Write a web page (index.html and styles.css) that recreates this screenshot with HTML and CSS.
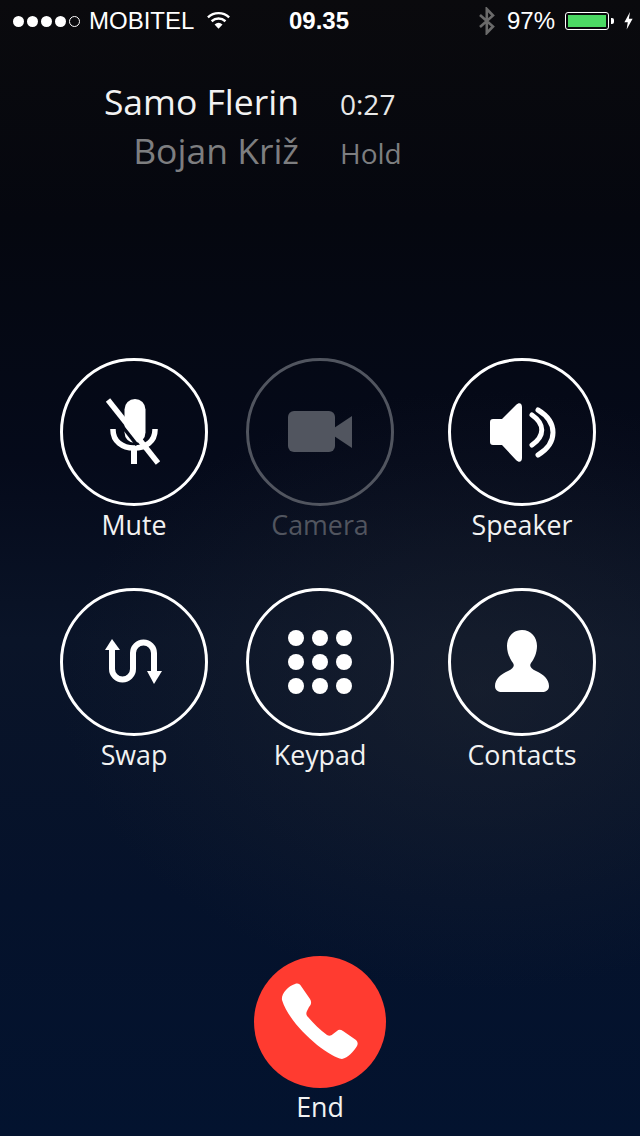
FILE: index.html
```html
<!DOCTYPE html>
<html lang="en">

<head>
  <link rel="stylesheet" href="styles.css">
</head>

<body>
  <div class="screen">
    <div class="status-bar">
      <div class="status-left">
        <span class="dot"></span><span class="dot"></span><span class="dot"></span><span class="dot"></span><span class="dot dot-empty"></span>
        <span class="carrier">MOBITEL</span>
        <svg class="wifi" width="24" height="19" viewBox="0 0 26 20">
          <path d="M1 6.5C7.5 0.5 17.5 0.5 24 6.5" fill="none" stroke="#fff" stroke-width="2.6"/>
          <path d="M5 10.8C9.5 6.8 15.5 6.8 20 10.8" fill="none" stroke="#fff" stroke-width="2.6"/>
          <path d="M12.5 19L8.2 14.2C11 12 14 12 16.8 14.2Z" fill="#fff"/>
        </svg>
      </div>
      <div class="status-time">09.35</div>
      <div class="status-right">
        <svg class="bluetooth" width="18" height="28" viewBox="0 0 18 28">
          <path d="M2 8L15 19.5L8.8 26V2L15 8.5L2 20" fill="none" stroke="#6a6a6a" stroke-width="2.6"/>
        </svg>
        <span class="battery-pct">97%</span>
        <div class="battery"><div class="battery-fill"></div></div>
        <div class="battery-cap"></div>
        <svg class="bolt" width="9" height="18" viewBox="0 0 12 20" preserveAspectRatio="none">
          <path d="M8 0L0.5 11.5H5L3.5 19.5L11.5 7.5H6.5Z" fill="#fff"/>
        </svg>
      </div>
    </div>

    <div class="call-info">
      <div class="call-name">Samo Flerin</div>
      <div class="call-time">0:27</div>
      <div class="call-name on-hold">Bojan Kri&#382;</div>
      <div class="call-time on-hold">Hold</div>
    </div>

    <div class="buttons">
      <div class="btn-row">
        <div class="btn">
          <div class="circle">
            <svg viewBox="0 0 148 148" width="148" height="148">
              <rect x="64.5" y="41" width="21" height="44" rx="10.5" fill="#fff"/>
              <path d="M53 71V72C53 83 62 90 74 90C86 90 95 83 95 72V71" fill="none" stroke="#fff" stroke-width="5.5"/>
              <rect x="71" y="90" width="6" height="16" fill="#fff"/>
              <path d="M44 45L77 87" stroke="#050a1a" stroke-width="3.5"/>
              <path d="M48 42L98 105" stroke="#fff" stroke-width="5.5"/>
            </svg>
          </div>
          <div class="label">Mute</div>
        </div>
        <div class="btn btn-middle btn-off">
          <div class="circle">
            <svg viewBox="0 0 148 148" width="148" height="148">
              <rect x="42" y="53" width="47" height="41" rx="6" fill="#51555f"/>
              <path d="M88 70L106 58V90L88 78Z" fill="#51555f"/>
            </svg>
          </div>
          <div class="label">Camera</div>
        </div>
        <div class="btn">
          <div class="circle">
            <svg viewBox="0 0 148 148" width="148" height="148">
              <path d="M45 61H54L68 47C71 44 74 45 74 49V100C74 104 71 105 68 102L54 87H45C43 87 42 86 42 84V64C42 62 43 61 45 61Z" fill="#fff"/>
              <path d="M84 57C97 66 97 78 84 87" fill="none" stroke="#fff" stroke-width="5" stroke-linecap="round"/>
              <path d="M90 52C110 64 110 85 90 97" fill="none" stroke="#fff" stroke-width="5" stroke-linecap="round"/>
            </svg>
          </div>
          <div class="label">Speaker</div>
        </div>
      </div>

      <div class="btn-row">
        <div class="btn">
          <div class="circle">
            <svg viewBox="0 0 148 148" width="148" height="148">
              <path d="M52 60V81A10.5 10.5 0 0 0 73 81V65A10.5 10.5 0 0 1 94 65V85" fill="none" stroke="#fff" stroke-width="6"/>
              <path d="M45 62L52 51L60 62Z" fill="#fff"/>
              <path d="M87 83H102L94 96Z" fill="#fff"/>
            </svg>
          </div>
          <div class="label">Swap</div>
        </div>
        <div class="btn btn-middle">
          <div class="circle">
            <svg viewBox="0 0 148 148" width="148" height="148" fill="#fff">
              <circle cx="50" cy="50" r="8"/><circle cx="74" cy="50" r="8"/><circle cx="98" cy="50" r="8"/>
              <circle cx="50" cy="74" r="8"/><circle cx="74" cy="74" r="8"/><circle cx="98" cy="74" r="8"/>
              <circle cx="50" cy="98" r="8"/><circle cx="74" cy="98" r="8"/><circle cx="98" cy="98" r="8"/>
            </svg>
          </div>
          <div class="label">Keypad</div>
        </div>
        <div class="btn">
          <div class="circle">
            <svg viewBox="0 0 148 148" width="148" height="148">
              <path d="M74 42C83 42 89 49 89 58C89 65 86 71 83 75C81 78 83 81 88 83C95 86 101 91 101 98C101 102 98 104 94 104H54C50 104 47 102 47 98C47 91 53 86 60 83C65 81 67 78 65 75C62 71 59 65 59 58C59 49 65 42 74 42Z" fill="#fff"/>
            </svg>
          </div>
          <div class="label">Contacts</div>
        </div>
      </div>
    </div>

    <div class="end-call">
      <div class="end-circle">
        <svg viewBox="0 0 132 132" width="132" height="132">
          <path d="M28 44C27 38 34 30 41 28C44 27 46 28 47 30L56 43C58 46 57 49 55 51L53 55C52 57 52 59 54 61C60 68 66 74 73 79C75 80 77 80 79 78L83 75C85 73 87 74 89 75L102 84C104 86 104 88 103 90C100 95 94 102 88 103C74 101 36 70 28 44Z" fill="#fff"/>
        </svg>
      </div>
      <div class="label">End</div>
    </div>
  </div>
</body>

</html>
```

FILE: styles.css
```css
html, body {
  margin: 0;
  padding: 0;
}

.screen {
  width: 640px;
  height: 1136px;
  overflow: hidden;
  color: #fff;
  font-family: "Open Sans", sans-serif;
  background:
    radial-gradient(ellipse 420px 300px at 480px 690px, rgba(40, 44, 52, 0.4), rgba(40, 44, 52, 0)),
    linear-gradient(#0a0a0d 0, #05070f 220px, #050a1a 460px, #0a1428 640px, #05122b 900px, #03132f 1136px);
}

/* status bar */
.status-bar {
  height: 42px;
  display: grid;
  grid-template-columns: 1fr auto 1fr;
  align-items: center;
  padding: 0 7px 0 9px;
  font-family: "Liberation Sans", sans-serif;
  font-size: 24px;
}

.status-left {
  display: flex;
  align-items: center;
  padding-left: 4px;
}

.dot {
  width: 11px;
  height: 11px;
  border-radius: 50%;
  background-color: #fff;
  margin-right: 3px;
  box-sizing: border-box;
}

.dot-empty {
  background: none;
  border: 1px solid #fff;
}

.carrier {
  margin-left: 6px;
}

.wifi {
  margin-left: 13px;
  margin-top: -2px;
}

.status-time {
  font-weight: 700;
  margin-left: -4px;
}

.status-right {
  display: flex;
  align-items: center;
  justify-content: flex-end;
}

.bluetooth {
  margin-right: 11px;
}

.battery-pct {
  margin-right: 10px;
}

.battery {
  width: 44px;
  height: 18px;
  border: 1px solid #fff;
  border-radius: 3px;
  padding: 2px;
  box-sizing: border-box;
}

.battery-fill {
  height: 100%;
  background-color: #4cd964;
}

.battery-cap {
  width: 3px;
  height: 6px;
  margin-left: 2px;
  background-color: #fff;
  border-radius: 0 2px 2px 0;
}

.bolt {
  margin-left: 10px;
}

/* who is on the line */
.call-info {
  display: grid;
  grid-template-columns: 214px auto;
  column-gap: 41px;
  align-items: baseline;
  justify-content: start;
  padding: 35px 0 0 85px;
}

.call-name {
  font-size: 35.5px;
  line-height: 49px;
  text-align: right;
  white-space: nowrap;
  color: #f2f2f2;
}

.call-time {
  font-size: 28px;
  line-height: 30px;
  color: #e8e8e8;
}

.on-hold {
  color: #7d7e80;
}

/* round buttons */
.buttons {
  margin-top: 183px;
  padding-left: 60px;
}

.btn-row {
  display: flex;
  height: 230px;
}

.btn {
  width: 148px;
}

.btn-middle {
  margin: 0 54px 0 38px;
}

.circle {
  width: 148px;
  height: 148px;
  border: 3px solid #fff;
  border-radius: 50%;
  box-sizing: border-box;
  display: flex;
  align-items: center;
  justify-content: center;
}

.circle svg {
  flex: none;
}

.label {
  font-size: 26.8px;
  line-height: 38px;
  text-align: center;
  color: #f2f2f2;
}

.btn-off .circle {
  border-color: #51555f;
}

.btn-off .label {
  color: #51555f;
}

/* end call */
.end-call {
  margin-top: 138px;
  width: 132px;
  margin-left: 254px;
}

.end-circle {
  width: 132px;
  height: 132px;
  border-radius: 50%;
  background-color: #ff3b30;
}

.end-circle svg {
  display: block;
}
```
